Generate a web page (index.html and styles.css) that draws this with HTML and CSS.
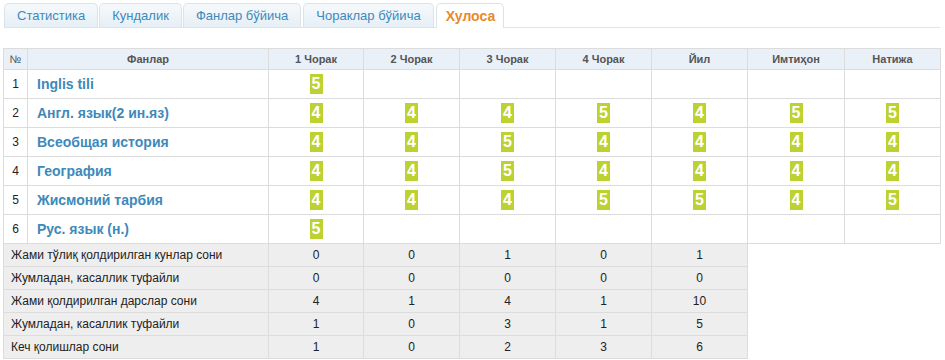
FILE: index.html
```html
<!DOCTYPE html>
<html lang="uz">
<head>
<meta charset="utf-8">
<title>Хулоса</title>
<link rel="stylesheet" href="styles.css">
</head>
<body>
<div class="page">
  <ul class="tabs">
    <li class="tab">Статистика</li>
    <li class="tab">Кундалик</li>
    <li class="tab">Фанлар бўйича</li>
    <li class="tab wide">Чораклар бўйича</li>
    <li class="tab active">Хулоса</li>
  </ul>

  <table class="grades">
    <colgroup>
      <col class="c-num"><col class="c-subj">
      <col class="c-q"><col class="c-q2"><col class="c-q2"><col class="c-q2"><col class="c-q2"><col class="c-q3"><col class="c-q2">
    </colgroup>
    <thead>
      <tr>
        <th class="num">№</th><th>Фанлар</th><th>1 Чорак</th><th>2 Чорак</th><th>3 Чорак</th><th>4 Чорак</th><th>Йил</th><th>Имтиҳон</th><th>Натижа</th>
      </tr>
    </thead>
    <tbody>
      <tr class="subj-row">
        <td class="num">1</td><td class="subj">Inglis tili</td>
        <td><span class="mark">5</span></td><td></td><td></td><td></td><td></td><td></td><td></td>
      </tr>
      <tr class="subj-row">
        <td class="num">2</td><td class="subj">Англ. язык(2 ин.яз)</td>
        <td><span class="mark">4</span></td><td><span class="mark">4</span></td><td><span class="mark">4</span></td><td><span class="mark">5</span></td><td><span class="mark">4</span></td><td><span class="mark">5</span></td><td><span class="mark">5</span></td>
      </tr>
      <tr class="subj-row">
        <td class="num">3</td><td class="subj">Всеобщая история</td>
        <td><span class="mark">4</span></td><td><span class="mark">4</span></td><td><span class="mark">5</span></td><td><span class="mark">4</span></td><td><span class="mark">4</span></td><td><span class="mark">4</span></td><td><span class="mark">4</span></td>
      </tr>
      <tr class="subj-row">
        <td class="num">4</td><td class="subj">География</td>
        <td><span class="mark">4</span></td><td><span class="mark">4</span></td><td><span class="mark">5</span></td><td><span class="mark">4</span></td><td><span class="mark">4</span></td><td><span class="mark">4</span></td><td><span class="mark">4</span></td>
      </tr>
      <tr class="subj-row">
        <td class="num">5</td><td class="subj">Жисмоний тарбия</td>
        <td><span class="mark">4</span></td><td><span class="mark">4</span></td><td><span class="mark">4</span></td><td><span class="mark">5</span></td><td><span class="mark">5</span></td><td><span class="mark">4</span></td><td><span class="mark">5</span></td>
      </tr>
      <tr class="subj-row">
        <td class="num">6</td><td class="subj">Рус. язык (н.)</td>
        <td><span class="mark">5</span></td><td></td><td></td><td></td><td></td><td></td><td></td>
      </tr>
      <tr class="stat-row">
        <td colspan="2" class="label">Жами тўлиқ қолдирилган кунлар сони</td>
        <td>0</td><td>0</td><td>1</td><td>0</td><td>1</td>
      </tr>
      <tr class="stat-row">
        <td colspan="2" class="label">Жумладан, касаллик туфайли</td>
        <td>0</td><td>0</td><td>0</td><td>0</td><td>0</td>
      </tr>
      <tr class="stat-row">
        <td colspan="2" class="label">Жами қолдирилган дарслар сони</td>
        <td>4</td><td>1</td><td>4</td><td>1</td><td>10</td>
      </tr>
      <tr class="stat-row">
        <td colspan="2" class="label">Жумладан, касаллик туфайли</td>
        <td>1</td><td>0</td><td>3</td><td>1</td><td>5</td>
      </tr>
      <tr class="stat-row">
        <td colspan="2" class="label">Кеч қолишлар сони</td>
        <td>1</td><td>0</td><td>2</td><td>3</td><td>6</td>
      </tr>
    </tbody>
  </table>
</div>
</body>
</html>
```

FILE: styles.css
```css
html, body {
  margin: 0;
  padding: 0;
  background: #ffffff;
}

body {
  font-family: "Liberation Sans", Arial, sans-serif;
  color: #222222;
}

.page {
  padding: 3px 5px 0 3px;
}

.tabs {
  list-style: none;
  margin: 0 0 0 1px;
  padding: 0;
  display: flex;
  gap: 1px;
  border-bottom: 1px solid #dfe3e6;
  height: 24px;
}

.tab {
  box-sizing: border-box;
  height: 24px;
  padding: 0 12px;
  display: flex;
  align-items: center;
  font-size: 13px;
  color: #3c8abb;
  background: linear-gradient(#f5f9fc, #e6eff6);
  border: 1px solid #dbe3e9;
  border-bottom: none;
  border-radius: 5px 5px 0 0;
}

.tab.wide {
  margin-left: 1px;
}

.tab.active {
  height: 25px;
  margin-left: 1px;
  margin-bottom: -1px;
  background: #ffffff;
  color: #e8892c;
  font-weight: bold;
  font-size: 14px;
  padding: 0 8px 0 9px;
}

.grades {
  margin-top: 20px;
  width: 937px;
  border-collapse: collapse;
  table-layout: fixed;
}

.c-num { width: 24px; }
.c-subj { width: 241px; }
.c-q { width: 95px; }
.c-q2 { width: 96px; }
.c-q3 { width: 97px; }

.grades th,
.grades td {
  border: 1px solid #dcdcdc;
  padding: 0;
  text-align: center;
}

.grades th {
  height: 20px;
  background: #e9f0f8;
  color: #555555;
  font-size: 11px;
  font-weight: bold;
}

.grades th.num {
  font-weight: normal;
}

.subj-row td {
  height: 28px;
}

.grades td.num {
  font-size: 12px;
  color: #222222;
}

.grades td.subj {
  text-align: left;
  padding-left: 9px;
  font-size: 14px;
  font-weight: bold;
  color: #3d89ba;
}

.mark {
  display: inline-block;
  width: 13px;
  height: 20px;
  line-height: 20px;
  background: #bdd131;
  color: #ffffff;
  font-weight: bold;
  font-size: 16px;
  vertical-align: middle;
}

.stat-row td {
  height: 22px;
  background: #eeeeee;
  font-size: 12px;
  color: #222222;
}

.stat-row td.label {
  text-align: left;
  padding-left: 7px;
}
```
